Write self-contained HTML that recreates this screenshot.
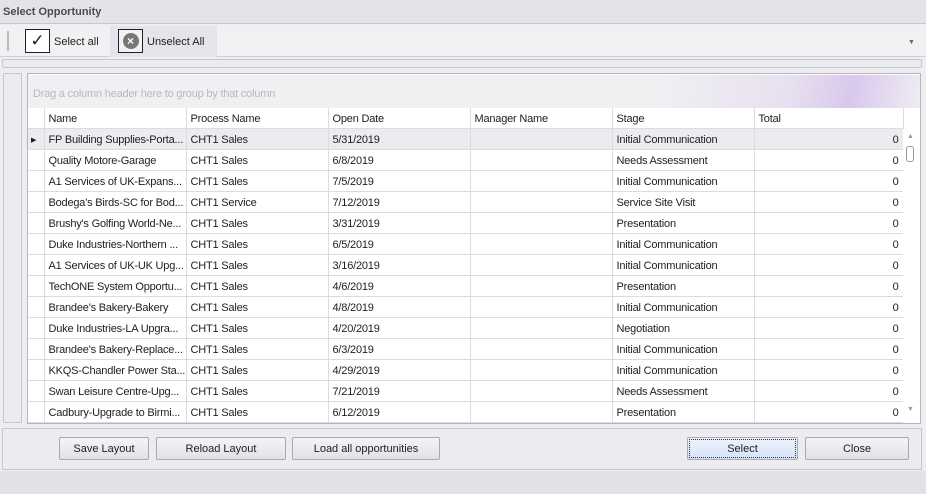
<!DOCTYPE html><html><head><style>
*{box-sizing:border-box;margin:0;padding:0}
body{width:926px;height:494px;background:#eeeef2;font-family:"Liberation Sans",sans-serif;font-size:11px;color:#1e1e1e;position:relative;overflow:hidden}
.a{position:absolute}
.btn{position:absolute;top:437px;height:23px;border:1px solid #a9a9b0;border-radius:2px;background:linear-gradient(#f4f4f6,#e2e2e6);text-align:center;line-height:23px;font-size:11px}
table{border-collapse:collapse;table-layout:fixed}
td{height:21px;border-right:1px solid #dcdce0;border-bottom:1px solid #dcdce0;padding:2px 4px 0;white-space:nowrap;overflow:hidden;font-size:11px;letter-spacing:-0.2px}
tr.h td{height:20px;background:#fff}
</style></head><body>
<div class="a" style="left:0;top:0;width:926px;height:24px;background:#e4e4e8;border-bottom:1px solid #c8c8cc"></div>
<div class="a" style="left:3px;top:6px;font-weight:bold;color:#4a4a56;font-size:11px">Select Opportunity</div>
<div class="a" style="left:0;top:25px;width:926px;height:32px;background:#f1f1f4;border-bottom:1px solid #d0d0d4"></div>
<div class="a" style="left:7px;top:31px;width:2px;height:20px;border-left:1px solid #bbb;border-right:1px solid #bbb"></div>
<div class="a" style="left:25px;top:29px;width:25px;height:24px;border:1px solid #222;background:#fff;text-align:center;font-size:17px;line-height:22px">✓</div>
<div class="a" style="left:54px;top:36px">Select all</div>
<div class="a" style="left:110px;top:26px;width:107px;height:31px;background:#e4e4ea"></div>
<div class="a" style="left:118px;top:29px;width:25px;height:24px;border:1px solid #222;background:#f2f2f2"><div style="margin:3px auto;width:16px;height:16px;border-radius:50%;background:#777;color:#fff;font-size:12px;font-weight:bold;text-align:center;line-height:16px">×</div></div>
<div class="a" style="left:147px;top:36px">Unselect All</div>
<div class="a" style="left:908px;top:39px;font-size:7px;color:#666">▼</div>
<div class="a" style="left:2px;top:59px;width:920px;height:9px;border:1px solid #c8c8cc;background:#ececf0;border-radius:2px"></div>
<div class="a" style="left:3px;top:73px;width:19px;height:350px;border:1px solid #c8c8cc;background:#ececf0"></div>
<div class="a" style="left:27px;top:73px;width:894px;height:351px;border:1px solid #b4b4bc;background:#fff"></div>
<div class="a" style="left:28px;top:75px;width:892px;height:33px;background:linear-gradient(100deg,#f0f0f2 70%,#e8e0f0 85%,#d8c8ec 92%,#f0ecf4 100%)"></div>
<div class="a" style="left:33px;top:88px;color:#b8b8c0;letter-spacing:-0.2px">Drag a column header here to group by that column</div>
<table class="a" style="left:28px;top:108px;width:875px">
<colgroup><col style="width:16px"><col style="width:142px"><col style="width:142px"><col style="width:142px"><col style="width:142px"><col style="width:142px"><col style="width:149px"></colgroup>
<tr class="h"><td></td><td>Name</td><td>Process Name</td><td>Open Date</td><td>Manager Name</td><td>Stage</td><td>Total</td></tr>
<tr style="background:#ececf0"><td style="font-size:7px;padding:2px 3px 0">▶</td><td>FP Building Supplies-Porta...</td><td>CHT1 Sales</td><td>5/31/2019</td><td></td><td>Initial Communication</td><td style="text-align:right">0</td></tr>
<tr><td></td><td>Quality Motore-Garage</td><td>CHT1 Sales</td><td>6/8/2019</td><td></td><td>Needs Assessment</td><td style="text-align:right">0</td></tr>
<tr><td></td><td>A1 Services of UK-Expans...</td><td>CHT1 Sales</td><td>7/5/2019</td><td></td><td>Initial Communication</td><td style="text-align:right">0</td></tr>
<tr><td></td><td>Bodega's Birds-SC for Bod...</td><td>CHT1 Service</td><td>7/12/2019</td><td></td><td>Service Site Visit</td><td style="text-align:right">0</td></tr>
<tr><td></td><td>Brushy's Golfing World-Ne...</td><td>CHT1 Sales</td><td>3/31/2019</td><td></td><td>Presentation</td><td style="text-align:right">0</td></tr>
<tr><td></td><td>Duke Industries-Northern ...</td><td>CHT1 Sales</td><td>6/5/2019</td><td></td><td>Initial Communication</td><td style="text-align:right">0</td></tr>
<tr><td></td><td>A1 Services of UK-UK Upg...</td><td>CHT1 Sales</td><td>3/16/2019</td><td></td><td>Initial Communication</td><td style="text-align:right">0</td></tr>
<tr><td></td><td>TechONE System Opportu...</td><td>CHT1 Sales</td><td>4/6/2019</td><td></td><td>Presentation</td><td style="text-align:right">0</td></tr>
<tr><td></td><td>Brandee's Bakery-Bakery</td><td>CHT1 Sales</td><td>4/8/2019</td><td></td><td>Initial Communication</td><td style="text-align:right">0</td></tr>
<tr><td></td><td>Duke Industries-LA Upgra...</td><td>CHT1 Sales</td><td>4/20/2019</td><td></td><td>Negotiation</td><td style="text-align:right">0</td></tr>
<tr><td></td><td>Brandee's Bakery-Replace...</td><td>CHT1 Sales</td><td>6/3/2019</td><td></td><td>Initial Communication</td><td style="text-align:right">0</td></tr>
<tr><td></td><td>KKQS-Chandler Power Sta...</td><td>CHT1 Sales</td><td>4/29/2019</td><td></td><td>Initial Communication</td><td style="text-align:right">0</td></tr>
<tr><td></td><td>Swan Leisure Centre-Upg...</td><td>CHT1 Sales</td><td>7/21/2019</td><td></td><td>Needs Assessment</td><td style="text-align:right">0</td></tr>
<tr><td></td><td>Cadbury-Upgrade to Birmi...</td><td>CHT1 Sales</td><td>6/12/2019</td><td></td><td>Presentation</td><td style="text-align:right">0</td></tr>
</table>
<div class="a" style="left:903px;top:129px;width:17px;height:294px;background:#fff"></div>
<div class="a" style="left:907px;top:133px;font-size:7px;color:#999">▲</div>
<div class="a" style="left:906px;top:146px;width:8px;height:16px;border:1px solid #999;border-radius:3px;background:#fff"></div>
<div class="a" style="left:907px;top:406px;font-size:7px;color:#999">▼</div>
<div class="a" style="left:2px;top:428px;width:920px;height:42px;border:1px solid #c8c8cc;background:#ececf0"></div>
<div class="btn" style="left:59px;width:90px">Save Layout</div>
<div class="btn" style="left:156px;width:130px">Reload Layout</div>
<div class="btn" style="left:292px;width:148px">Load all opportunities</div>
<div class="btn" style="left:687px;width:111px;background:linear-gradient(#eef2fc,#d6e2f8);outline:1px dotted #333;outline-offset:-3px">Select</div>
<div class="btn" style="left:805px;width:104px">Close</div>
<div class="a" style="left:0;top:471px;width:926px;height:23px;background:#e2e2e6"></div>
</body></html>
